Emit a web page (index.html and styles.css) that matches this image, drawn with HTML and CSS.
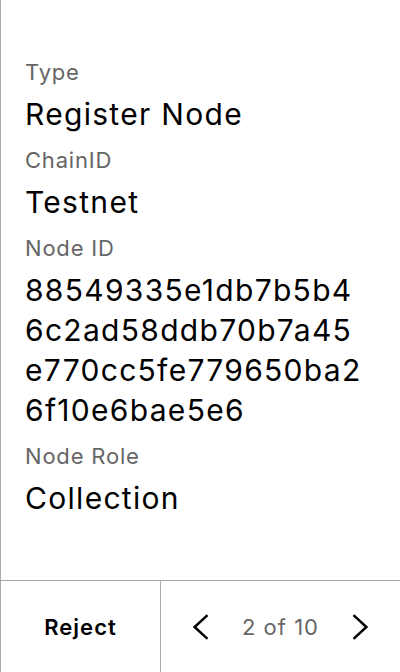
FILE: index.html
```html
<!DOCTYPE html>
<html>
<head>
<meta charset="utf-8">
<link rel="stylesheet" href="styles.css">
</head>
<body>
<div class="screen">
  <div class="content">
    <div class="field">
      <div class="label">Type</div>
      <div class="value">Register Node</div>
    </div>
    <div class="field">
      <div class="label">ChainID</div>
      <div class="value">Testnet</div>
    </div>
    <div class="field">
      <div class="label">Node ID</div>
      <div class="value hex">88549335e1db7b5b4<br>6c2ad58ddb70b7a45<br>e770cc5fe779650ba2<br>6f10e6bae5e6</div>
    </div>
    <div class="field">
      <div class="label">Node Role</div>
      <div class="value">Collection</div>
    </div>
  </div>
  <div class="footer">
    <div class="reject">Reject</div>
    <div class="pager">
      <svg class="chev" width="16" height="26" viewBox="0 0 16 26"><path d="M14.5 1.2 L1.6 13 L14.5 24.8" fill="none" stroke="#000" stroke-width="2.5"/></svg>
      <span class="count">2 of 10</span>
      <svg class="chev" width="16" height="26" viewBox="0 0 16 26"><path d="M1.5 1.2 L14.4 13 L1.5 24.8" fill="none" stroke="#000" stroke-width="2.5"/></svg>
    </div>
  </div>
</div>
</body>
</html>
```
FILE: styles.css
```css
html, body {
  margin: 0;
  padding: 0;
  background: #fff;
}
body {
  font-family: Inter, "Noto Sans", sans-serif;
  color: #000;
}
.screen {
  width: 399px;
  height: 672px;
  border-left: 1px solid #a9a9a9;
  display: flex;
  flex-direction: column;
}
.content {
  flex: 1;
  padding: 58px 24px 0 24px;
}
.field {
  margin-bottom: 12px;
}
.label {
  font-size: 22px;
  line-height: 28px;
  letter-spacing: 0.8px;
  color: #666;
}
.value {
  font-size: 30px;
  line-height: 40px;
  letter-spacing: 1.3px;
  margin-top: 8px;
}
.footer {
  height: 91px;
  border-top: 1px solid #a9a9a9;
  display: flex;
}
.reject {
  width: 159px;
  border-right: 1px solid #a9a9a9;
  display: flex;
  align-items: center;
  justify-content: center;
  font-size: 22px;
  font-weight: 600;
  letter-spacing: 1px;
}
.pager {
  flex: 1;
  display: flex;
  align-items: center;
  justify-content: space-between;
  padding: 0 32px 0 32px;
}
.chev {
  display: block;
}
.count {
  font-size: 22px;
  letter-spacing: 1px;
  color: #666;
}
```
